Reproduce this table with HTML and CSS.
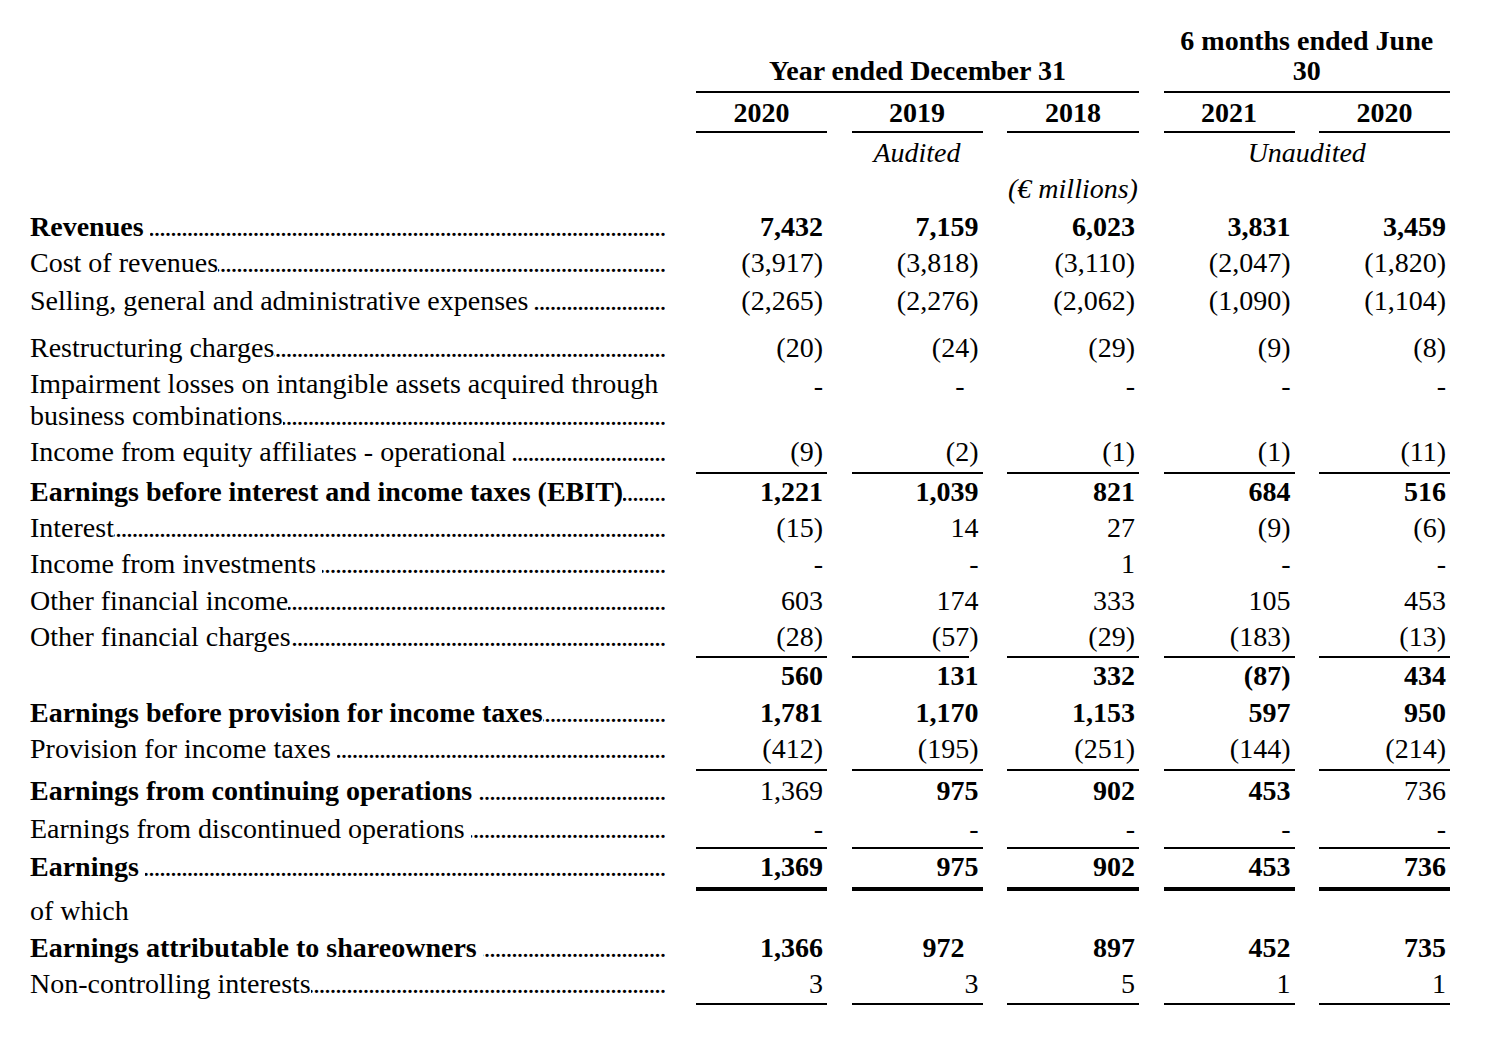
FILE: index.html
```html
<!DOCTYPE html>
<html lang="en">
<head>
<meta charset="utf-8">
<title>Income statement</title>
<link rel="stylesheet" href="styles.css">
</head>
<body>
<div class="sheet">
  <div class="row head1">
    <div></div>
    <div class="grp grp-year">Year ended December 31</div>
    <div class="grp grp-half">6 months ended June<br>30</div>
  </div>
  <div class="row years">
    <div></div>
    <div class="yr">2020</div>
    <div class="yr">2019</div>
    <div class="yr">2018</div>
    <div class="yr">2021</div>
    <div class="yr">2020</div>
  </div>
  <div class="row notes pt2">
    <div></div>
    <div></div>
    <div class="note">Audited</div>
    <div></div>
    <div class="note span2">Unaudited</div>
  </div>
  <div class="row notes">
    <div></div>
    <div></div>
    <div></div>
    <div class="note">(€ millions)</div>
  </div>

  <div class="row b pt2">
    <div class="lbl"><span class="t sp">Revenues</span><span class="dots"></span></div>
    <div class="v">7,432</div><div class="v">7,159</div><div class="v">6,023</div><div class="v">3,831</div><div class="v">3,459</div>
  </div>
  <div class="row">
    <div class="lbl"><span class="t">Cost of revenues</span><span class="dots"></span></div>
    <div class="v">(3,917)</div><div class="v">(3,818)</div><div class="v">(3,110)</div><div class="v">(2,047)</div><div class="v">(1,820)</div>
  </div>
  <div class="row pt2">
    <div class="lbl"><span class="t sp">Selling, general and administrative expenses</span><span class="dots"></span></div>
    <div class="v">(2,265)</div><div class="v">(2,276)</div><div class="v">(2,062)</div><div class="v">(1,090)</div><div class="v">(1,104)</div>
  </div>
  <div class="row pt11">
    <div class="lbl"><span class="t">Restructuring charges</span><span class="dots"></span></div>
    <div class="v">(20)</div><div class="v">(24)</div><div class="v">(29)</div><div class="v">(9)</div><div class="v">(8)</div>
  </div>
  <div class="row wrap">
    <div class="lbl2">
      <div class="l1">Impairment losses on intangible assets acquired through</div>
      <div class="lbl"><span class="t">business combinations</span><span class="dots"></span></div>
    </div>
    <div class="v">-</div><div class="v in14">-</div><div class="v">-</div><div class="v">-</div><div class="v">-</div>
  </div>
  <div class="row pt2 ul ub2">
    <div class="lbl"><span class="t sp">Income from equity affiliates - operational</span><span class="dots"></span></div>
    <div class="v">(9)</div><div class="v">(2)</div><div class="v">(1)</div><div class="v">(1)</div><div class="v">(11)</div>
  </div>
  <div class="row b">
    <div class="lbl"><span class="t">Earnings before interest and income taxes (EBIT)</span><span class="dots"></span></div>
    <div class="v">1,221</div><div class="v">1,039</div><div class="v">821</div><div class="v">684</div><div class="v">516</div>
  </div>
  <div class="row">
    <div class="lbl"><span class="t">Interest</span><span class="dots"></span></div>
    <div class="v">(15)</div><div class="v">14</div><div class="v">27</div><div class="v">(9)</div><div class="v">(6)</div>
  </div>
  <div class="row">
    <div class="lbl"><span class="t sp">Income from investments</span><span class="dots"></span></div>
    <div class="v">-</div><div class="v">-</div><div class="v">1</div><div class="v">-</div><div class="v">-</div>
  </div>
  <div class="row pt1">
    <div class="lbl"><span class="t">Other financial income</span><span class="dots"></span></div>
    <div class="v">603</div><div class="v">174</div><div class="v">333</div><div class="v">105</div><div class="v">453</div>
  </div>
  <div class="row ul ub1">
    <div class="lbl"><span class="t">Other financial charges</span><span class="dots"></span></div>
    <div class="v">(28)</div><div class="v short">(57)</div><div class="v">(29)</div><div class="v">(183)</div><div class="v">(13)</div>
  </div>
  <div class="row b">
    <div></div>
    <div class="v">560</div><div class="v">131</div><div class="v">332</div><div class="v">(87)</div><div class="v">434</div>
  </div>
  <div class="row pt1">
    <div class="lbl b"><span class="t">Earnings before provision for income taxes</span><span class="dots"></span></div>
    <div class="v b">1,781</div><div class="v b">1,170</div><div class="v b">1,153</div><div class="v b">597</div><div class="v b">950</div>
  </div>
  <div class="row ul ub2">
    <div class="lbl"><span class="t sp">Provision for income taxes</span><span class="dots"></span></div>
    <div class="v">(412)</div><div class="v">(195)</div><div class="v">(251)</div><div class="v">(144)</div><div class="v">(214)</div>
  </div>
  <div class="row pt2">
    <div class="lbl b"><span class="t sp">Earnings from continuing operations</span><span class="dots"></span></div>
    <div class="v">1,369</div><div class="v b">975</div><div class="v b">902</div><div class="v b">453</div><div class="v">736</div>
  </div>
  <div class="row pt2 ul">
    <div class="lbl"><span class="t sp">Earnings from discontinued operations</span><span class="dots"></span></div>
    <div class="v">-</div><div class="v">-</div><div class="v">-</div><div class="v">-</div><div class="v">-</div>
  </div>
  <div class="row b ul2">
    <div class="lbl"><span class="t sp">Earnings</span><span class="dots"></span></div>
    <div class="v">1,369</div><div class="v">975</div><div class="v">902</div><div class="v">453</div><div class="v">736</div>
  </div>
  <div class="row pt2">
    <div class="lbl"><span class="t">of which</span></div>
  </div>
  <div class="row b pt1">
    <div class="lbl"><span class="t sp">Earnings attributable to shareowners</span><span class="dots"></span></div>
    <div class="v">1,366</div><div class="v in14">972</div><div class="v">897</div><div class="v">452</div><div class="v">735</div>
  </div>
  <div class="row ul ub1">
    <div class="lbl"><span class="t">Non-controlling interests</span><span class="dots"></span></div>
    <div class="v">3</div><div class="v">3</div><div class="v">5</div><div class="v">1</div><div class="v">1</div>
  </div>
</div>
</body>
</html>
```

FILE: styles.css
```css
html, body {
  margin: 0;
  padding: 0;
  background: #ffffff;
}

body {
  color: #000000;
  font-family: "Liberation Serif", "Times New Roman", serif;
  font-size: 28px;
}

.sheet {
  padding: 26px 0 0 30px;
  width: 1420px;
}

.row {
  display: grid;
  grid-template-columns: 641.5px 131px 131px 132px 131px 131px;
  column-gap: 24.5px;
  line-height: 36px;
}

.b {
  font-weight: bold;
}

/* header */
.head1 {
  line-height: 30px;
  font-weight: bold;
}

.grp {
  text-align: center;
  border-bottom: 2px solid #000;
  padding-bottom: 5px;
  align-self: end;
}

.grp-year {
  grid-column: 2 / 5;
}

.grp-half {
  grid-column: 5 / 7;
}

.years .yr {
  font-weight: bold;
  text-align: center;
  padding-top: 2px;
  border-bottom: 2px solid #000;
}

.note {
  font-style: italic;
  text-align: center;
}

.span2 {
  grid-column: 5 / 7;
}

/* labels with dot leaders */
.lbl {
  display: flex;
  padding-right: 6.5px;
  white-space: nowrap;
  min-width: 0;
}

.lbl .t {
  flex: 0 0 auto;
}

.lbl .t.sp {
  margin-right: 6px;
}

.dots {
  flex: 1 1 0;
  min-width: 0;
  overflow: hidden;
  direction: rtl;
  letter-spacing: -1.5px;
  font-weight: normal;
}

.dots::before {
  content: "..............................................................................................................................................";
}

.lbl2 {
  line-height: 32px;
  padding-top: 2px;
}

.lbl2 .l1 {
  white-space: nowrap;
}

.lbl2 .lbl {
  line-height: 32px;
}

/* values */
.v {
  text-align: right;
  padding-right: 4px;
  white-space: nowrap;
}

.wrap .v {
  padding-top: 2px;
}

.in14 {
  padding-right: 18px;
}

/* vertical spacing */
.pt1 { padding-top: 1px; }
.pt2 { padding-top: 2px; }
.pt11 { padding-top: 11px; }

/* rules under figures */
.ul .v {
  border-bottom: 2px solid #000;
}

.ub1 .v { padding-bottom: 1px; }
.ub2 .v { padding-bottom: 2px; }
.ub3 .v { padding-bottom: 3px; }

.ul .v.short {
  border-bottom: 0;
  padding-bottom: 3px;
  background: linear-gradient(#000, #000) no-repeat left bottom / calc(100% - 14px) 2px;
}

.ul2 .v {
  padding-bottom: 2px;
  border-bottom: 4px solid #000;
}
```
